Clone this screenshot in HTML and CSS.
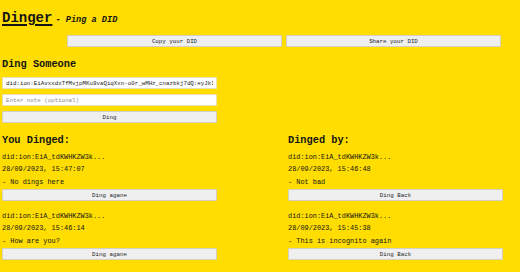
FILE: index.html
```html
<!DOCTYPE html>
<html lang="en">
<head>
<meta charset="utf-8">
<title>Dinger</title>
<link rel="stylesheet" href="styles.css">
</head>
<body>
  <header class="title">
    <h1 class="logo">Dinger</h1>
    <span class="tagline">- Ping a DID</span>
  </header>

  <div class="share-row">
    <button class="btn">Copy your DID</button>
    <button class="btn">Share your DID</button>
  </div>

  <section class="ding">
    <h2 class="heading">Ding Someone</h2>
    <input class="field" type="text" value="did:ion:EiAvxxdxTfMvjpMKu9vaQiqXxn-o0r_wMHz_cnazbkj7dQ:eyJkIjoiZXlKd2RXSnNhV01pT2lKMGJYQ">
    <input class="field field-note" type="text" placeholder="Enter note (optional)">
    <button class="btn">Ding</button>
  </section>

  <div class="lists">
    <section class="col">
      <h2 class="heading">You Dinged:</h2>
      <div class="item">
        <p class="line">did:ion:EiA_tdKWHKZW3k...</p>
        <p class="line">28/09/2023, 15:47:07</p>
        <p class="line">- No dings here</p>
        <button class="btn">Ding agane</button>
      </div>
      <div class="item">
        <p class="line">did:ion:EiA_tdKWHKZW3k...</p>
        <p class="line">28/09/2023, 15:46:14</p>
        <p class="line">- How are you?</p>
        <button class="btn">Ding agane</button>
      </div>
    </section>
    <section class="col">
      <h2 class="heading">Dinged by:</h2>
      <div class="item">
        <p class="line">did:ion:EiA_tdKWHKZW3k...</p>
        <p class="line">28/09/2023, 15:46:48</p>
        <p class="line">- Not bad</p>
        <button class="btn">Ding Back</button>
      </div>
      <div class="item">
        <p class="line">did:ion:EiA_tdKWHKZW3k...</p>
        <p class="line">28/09/2023, 15:45:38</p>
        <p class="line">- This is incognito again</p>
        <button class="btn">Ding Back</button>
      </div>
      <div class="item">
        <p class="line">did:ion:EiA_tdKWHKZW3k...</p>
        <p class="line">28/09/2023, 15:44:51</p>
        <p class="line">- Hello</p>
        <button class="btn">Ding Back</button>
      </div>
    </section>
  </div>
</body>
</html>
```

FILE: styles.css
```css
* { box-sizing: border-box; }

html, body {
  background: #ffdd00;
}

body {
  margin: 0;
  padding: 0 2px;
  font-family: "Liberation Mono", "Courier New", monospace;
  color: #151515;
  overflow: hidden;
  height: 272px;
}

.title {
  display: flex;
  align-items: baseline;
  gap: 3px;
  margin-top: 11px;
  height: 14px;
}

.logo {
  margin: 0;
  font-size: 14px;
  line-height: 14px;
  font-weight: bold;
  text-decoration: underline;
  text-decoration-thickness: 1.6px;
  text-underline-offset: 2px;
}

.tagline {
  font-size: 8.6px;
  font-weight: bold;
  font-style: italic;
}

.share-row {
  display: flex;
  gap: 4px;
  margin: 10px 0 0 65px;
}

.share-row .btn {
  width: 215px;
}

.btn {
  display: block;
  width: 215px;
  height: 12px;
  padding: 0;
  margin: 0;
  font-family: "Liberation Mono", "Courier New", monospace;
  font-size: 5.8px;
  color: #222;
  background: #efefef;
  border: 1px solid #d4cfc0;
  border-radius: 1px;
  text-align: center;
}

.heading {
  margin: 0;
  font-size: 10.3px;
  line-height: 12px;
  font-weight: bold;
}

.ding {
  display: flex;
  flex-direction: column;
  margin-top: 11px;
}

.ding .heading {
  margin-bottom: 7px;
}

.field {
  display: block;
  width: 215px;
  height: 12px;
  margin: 0 0 5px;
  padding: 0 3px;
  font-family: "Liberation Mono", "Courier New", monospace;
  font-size: 5.8px;
  color: #222;
  background: #ffffff;
  border: 1px solid #e6dfb8;
  border-radius: 1px;
  outline: none;
}

.field::placeholder {
  color: #8a8a8a;
}

.lists {
  display: grid;
  grid-template-columns: 215px 215px;
  column-gap: 71px;
  margin-top: 11px;
}

.col .heading {
  margin-bottom: 4.5px;
}

.item {
  margin-bottom: 8.5px;
}

.line {
  margin: 0;
  font-size: 6.9px;
  line-height: 12.5px;
}

.item .btn {
  margin-top: 1px;
}
```
